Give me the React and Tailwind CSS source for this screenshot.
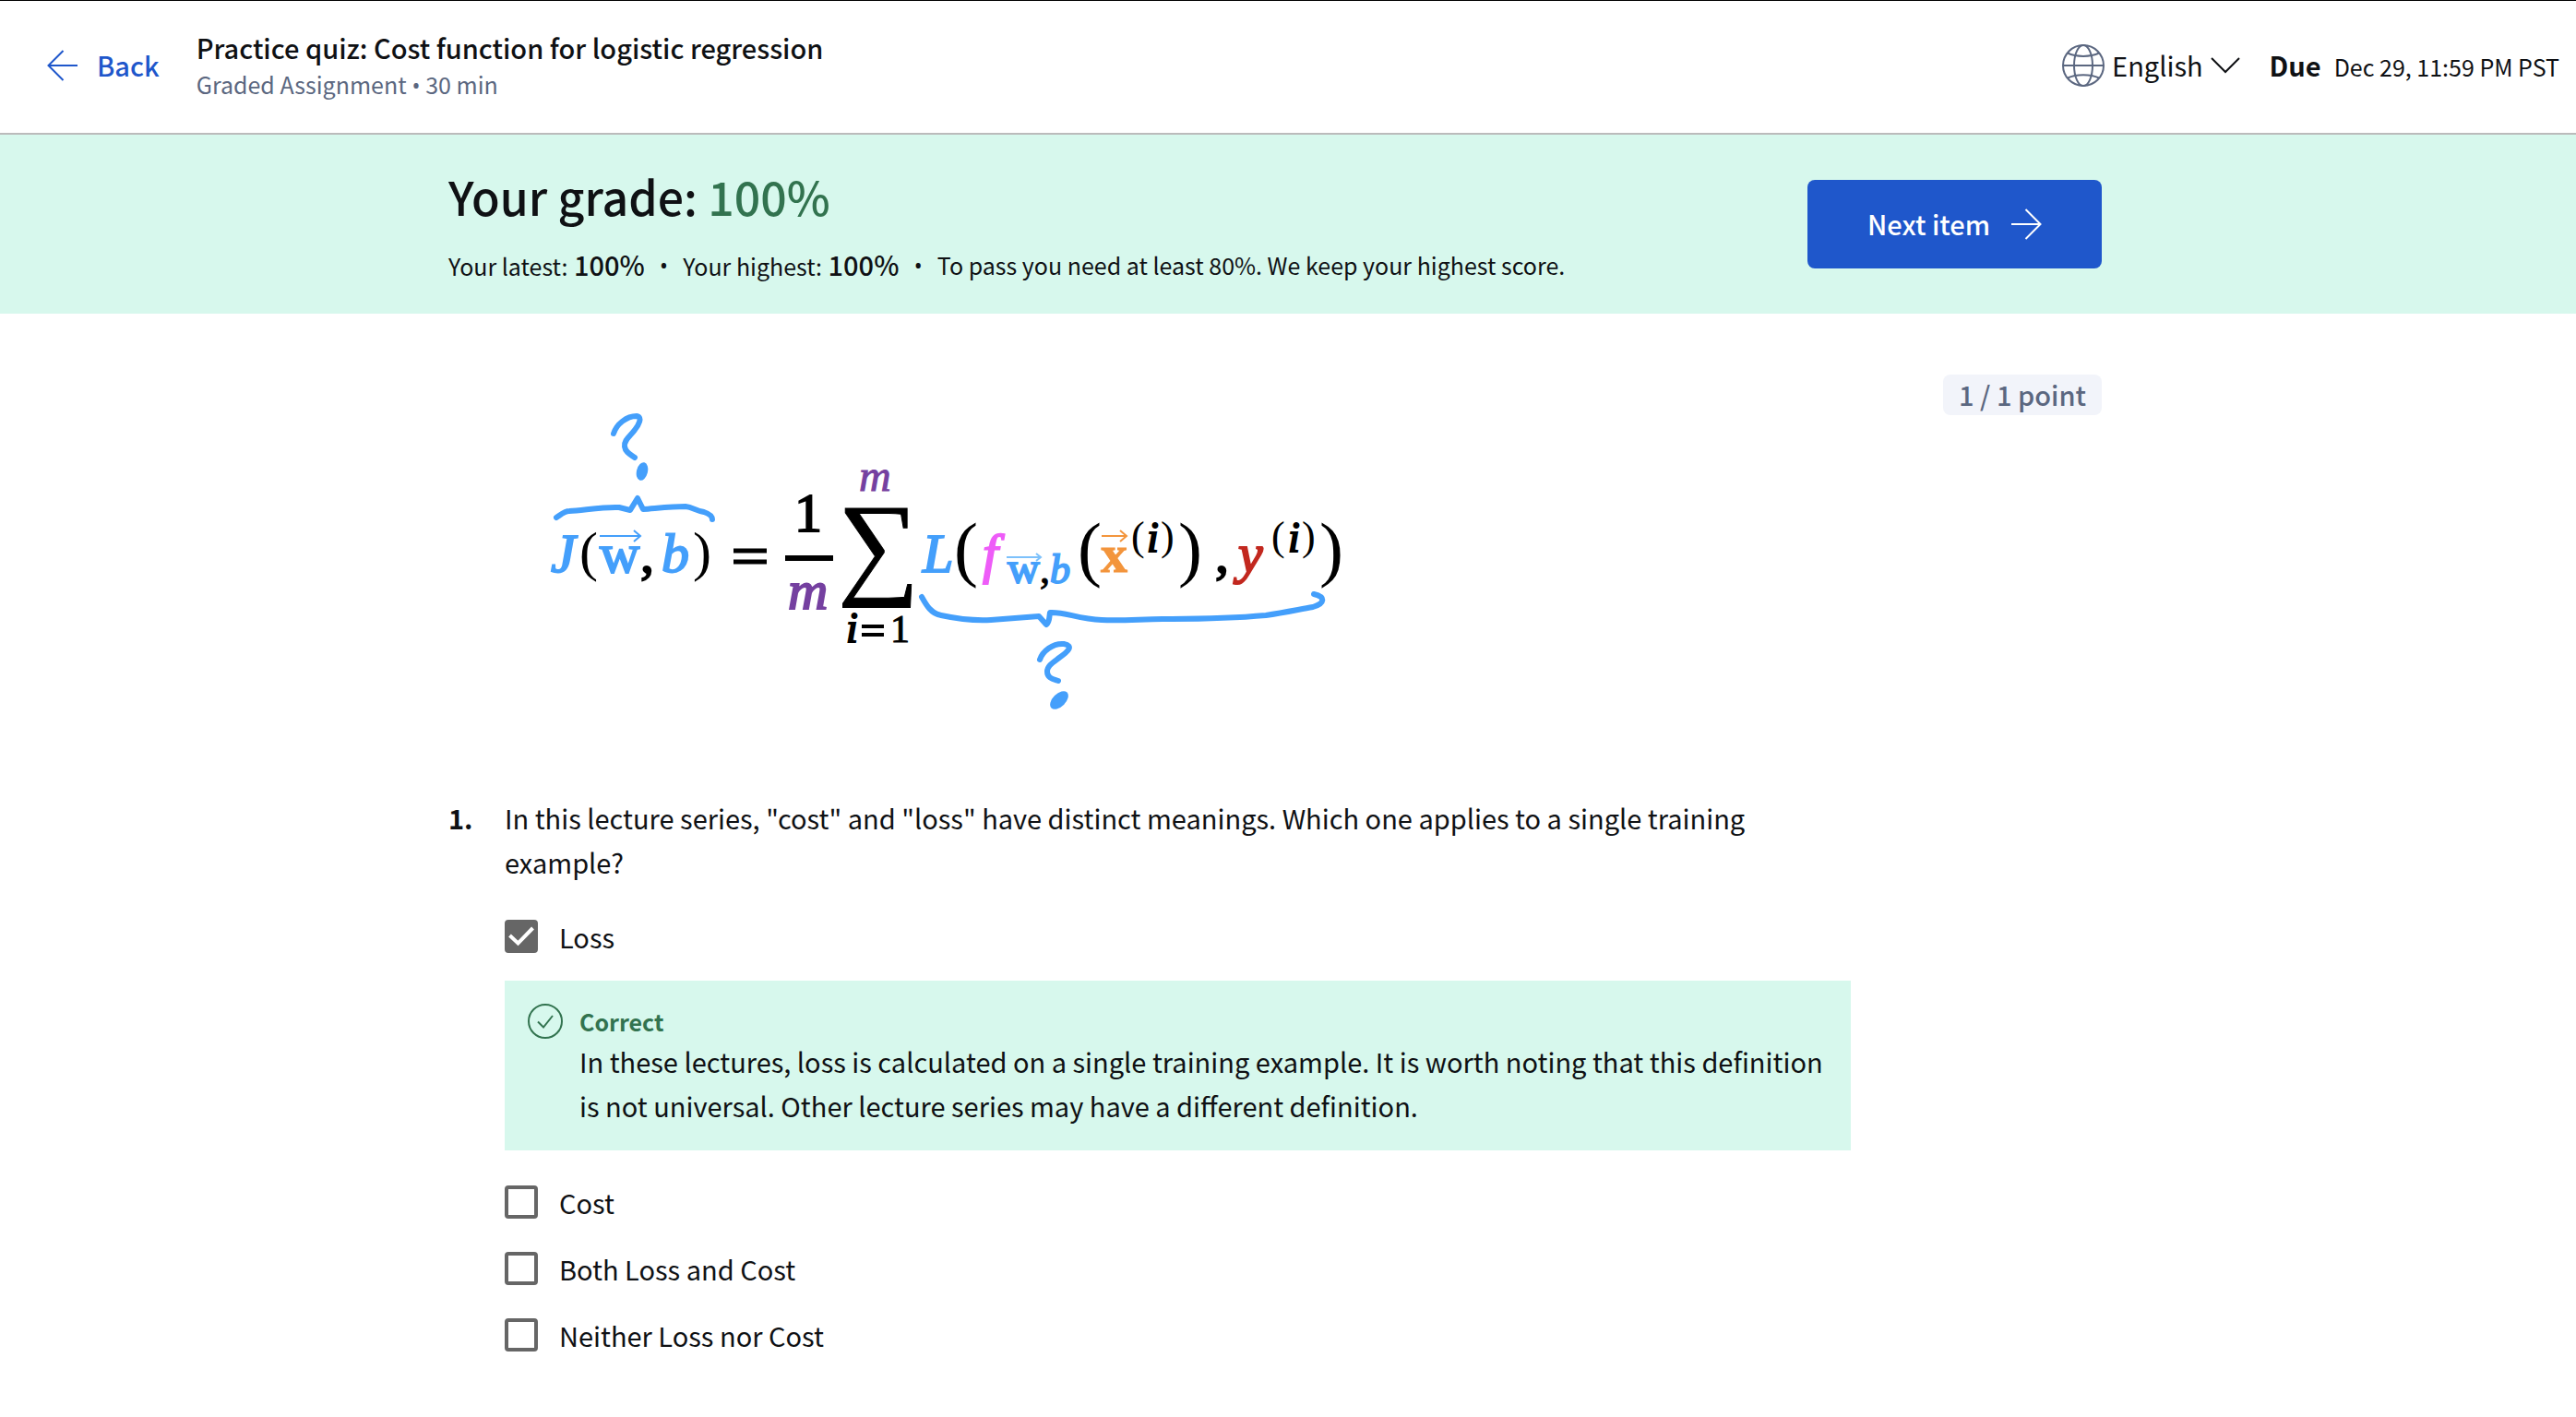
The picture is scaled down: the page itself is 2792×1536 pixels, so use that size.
import React from "react";

function ArrowIcon({ flip, className }) {
  return (
    <svg viewBox="0 0 34 34" className={className} fill="none" stroke="currentColor" strokeWidth="2" aria-hidden="true">
      {flip ? <path d="M33 17H2M17.500 1L1.500 17l16 16" /> : <path d="M1 17h32M16.500 1l16 16-16 16" />}
    </svg>
  );
}

function GlobeIcon() {
  return (
    <svg viewBox="0 0 46 46" className="size-[46px] text-[#5b6780]" fill="none" stroke="currentColor" strokeWidth="2" aria-hidden="true">
      <circle cx="23" cy="23" r="22" />
      <ellipse cx="23" cy="23" rx="10" ry="22" />
      <path d="M1 23h44M6 9.500c9 4.500 25 4.500 34 0M6 36.500c9-4.500 25-4.500 34 0" />
    </svg>
  );
}

function Bullet({ className }) {
  return <span className={`font-['Open_Sans',sans-serif] ${className ?? ""}`}>•</span>;
}

function Formula() {
  return (
    <svg
      viewBox="-13 -14 910 384"
      className="h-[384px] w-[910px] font-['Liberation_Serif',serif]"
      fontSize="60"
      strokeWidth="1"
      role="img"
      aria-label="Cost function J(w,b) as the mean of the loss L over m training examples"
    >
      <g fill="none" stroke="#449ffb" strokeWidth="6" strokeLinecap="round" strokeLinejoin="round">
        <path d="M105 50c3-10 14-19 25-19 7 1 2 10-2 15-5 7-12 11-11 18 1 7 7 9 11 12" />
        <path d="M43 141c6-4 9-7 14-7 16-1 39-5 54-4l12 3 8-13 6 12c14-1 31-3 46-3 8 1 10 4 20 6 6 2 9 4 9 8" />
        <path d="M439 227c5 9 10 18 21 20 14 3 37 6 54 5l52-4 8 9c4-3 3-8 4-13 16-1 30 7 56 8 24 1 44-1 66-1 40 0 78-1 112-4 20-3 34-6 51-9 13-4 14-11 1-14" />
        <path d="M567 295c3-9 14-18 26-17 11 2 5 8-5 15-8 6-13 9-13 15 0 7 6 8 12 10" />
      </g>
      <g fill="#449ffb" stroke="none">
        <ellipse cx="136" cy="91" rx="6" ry="10" transform="rotate(14 136 91)" />
        <ellipse cx="588" cy="339" rx="7" ry="12" transform="rotate(45 588 339)" />
      </g>

      <g fill="#449ffb" stroke="#449ffb" strokeWidth="2" fontStyle="italic">
        <text x="37" y="200">J</text>
        <text x="157" y="200">b</text>
        <text x="440" y="200">L</text>
        <text x="578" y="212" fontSize="44">b</text>
      </g>
      <g fill="#449ffb" stroke="#449ffb" strokeWidth="2">
        <text x="90" y="200">w</text>
        <text x="532" y="212" fontSize="48">w</text>
      </g>
      <path d="M90 161h44M127 155l7 6-7 6" fill="none" stroke="#449ffb" strokeWidth="2" />
      <path d="M531 184h36M563 180l5 4-5 4" fill="none" stroke="#7dc1fb" strokeWidth="2" />
      <text x="505" y="200" fill="#ee5cf8" stroke="#ee5cf8" strokeWidth="2" fontStyle="italic">f</text>
      <text x="633" y="200" fontSize="58" fill="#f3953c" stroke="#f3953c" fontWeight="bold">x</text>
      <path d="M634 161h26M654 155l7 6-7 6" fill="none" stroke="#f3953c" strokeWidth="2" />
      <text x="782" y="200" fill="#c2281f" stroke="#c2281f" strokeWidth="2" fontStyle="italic">y</text>
      <g fill="#7540a0" stroke="#7540a0" strokeWidth="2" fontStyle="italic">
        <text x="294" y="240">m</text>
        <text x="371" y="112" fontSize="48" strokeWidth="1">m</text>
      </g>

      <g fill="#000" stroke="#000">
        <text x="134" y="200" strokeWidth="2">,</text>
        <text x="757" y="200" strokeWidth="2">,</text>
        <text x="567" y="212" fontSize="44">,</text>
        <text x="301" y="156" strokeWidth="2">1</text>
        <text x="405" y="276" fontSize="42">1</text>
        <text x="357" y="276" fontSize="46" strokeWidth="2" fontStyle="italic">i</text>
        <text x="683" y="178" fontSize="46" strokeWidth="2" fontStyle="italic">i</text>
        <text x="836" y="178" fontSize="46" strokeWidth="2" fontStyle="italic">i</text>
        <text x="348" y="212" fontSize="124">∑</text>
      </g>
      <g fill="#000" stroke="none">
        <text x="68" y="198" fontSize="60">(</text>
        <text x="191" y="198" fontSize="60">)</text>
        <text x="474" y="201" fontSize="78">(</text>
        <text x="608" y="201" fontSize="78">(</text>
        <text x="717" y="201" fontSize="78">)</text>
        <text x="870" y="201" fontSize="78">)</text>
        <text x="666" y="176" fontSize="44">(</text>
        <text x="698" y="176" fontSize="44">)</text>
        <text x="818" y="176" fontSize="44">(</text>
        <text x="851" y="176" fontSize="44">)</text>
      </g>
      <g stroke="#000" strokeWidth="5">
        <path d="M235 177h36M235 189h36" />
        <path d="M374 259h24M374 268h24" strokeWidth="4" />
        <path d="M291 185h52" strokeWidth="6" />
      </g>
    </svg>
  );
}

function Option({ id, label, checked }) {
  return (
    <div className="flex items-center gap-[23px]">
      <span className="relative flex size-9 shrink-0">
        <input
          id={id}
          type="checkbox"
          defaultChecked={checked}
          className="peer size-9 appearance-none rounded-sm border-4 border-[#666] checked:bg-[#666]"
        />
        <svg viewBox="0 0 36 36" className="pointer-events-none absolute inset-0 hidden size-9 peer-checked:block" fill="none" stroke="#fff" strokeWidth="4" aria-hidden="true">
          <path d="M5.500 17l9 8.500L30.500 9" />
        </svg>
      </span>
      <label htmlFor={id} className="text-[29px] leading-9">{label}</label>
    </div>
  );
}

export default function App() {
  return (
    <div className="min-h-screen bg-white font-['Noto_Sans_CJK_SC','Open_Sans',sans-serif] text-[#0f1114]">
      <header className="flex h-[146px] items-center border-t border-b-2 border-t-black border-b-[#bbb] pr-[18px] pb-[3px] pl-[51px]">
        <a href="#back" className="flex items-center gap-5 text-[29px] font-medium text-[#1f57cb]">
          <ArrowIcon flip className="size-[34px]" />
          Back
        </a>
        <div className="ml-10">
          <h1 className="text-[29px] leading-10 font-medium">Practice quiz: Cost function for logistic regression</h1>
          <p className="text-[25px] leading-10 text-[#5b6780]">
            Graded Assignment <Bullet /> 30 min
          </p>
        </div>
        <div className="ml-auto flex items-center">
          <button type="button" className="flex items-center gap-2 text-[29px]">
            <GlobeIcon />
            <span>English</span>
            <svg viewBox="0 0 32 18" className="h-[18px] w-8" fill="none" stroke="currentColor" strokeWidth="2" aria-hidden="true">
              <path d="M1 1l15 15L31 1" />
            </svg>
          </button>
          <p className="ml-8 flex items-baseline gap-[14px]">
            <span className="text-[29px] font-bold">Due</span>
            <span className="text-[25px]">Dec 29, 11:59 PM PST</span>
          </p>
        </div>
      </header>

      <section className="bg-[#d7f8ed] pr-7">
        <div className="mx-auto flex h-[194px] max-w-[1792px] items-center justify-between">
          <div>
            <h2 className="text-[50px] leading-[68px] font-medium">
              Your grade: <span className="text-[#32734f]">100%</span>
            </h2>
            <p className="mt-5 flex items-center text-[25px] leading-10">
              <span>Your latest:<b className="text-[29px] font-medium"> 100%</b></span>
              <Bullet className="mx-4" />
              <span>Your highest:<b className="text-[29px] font-medium"> 100%</b></span>
              <Bullet className="mx-4" />
              <span>To pass you need at least 80%. We keep your highest score.</span>
            </p>
          </div>
          <button type="button" className="flex h-24 items-center gap-[22px] rounded-lg bg-[#1f57cb] px-[65px] text-[29px] font-medium text-white">
            Next item
            <ArrowIcon className="size-[34px]" />
          </button>
        </div>
      </section>

      <main className="pr-7">
        <div className="mx-auto flex max-w-[1792px] items-start justify-between pt-[66px]">
          <span className="mt-[456px] w-[61px] text-[29px] leading-[48px] font-bold">1.</span>
          <div className="max-w-[1459px] flex-1">
            <Formula />
            <p className="mt-[72px] text-[29px] leading-[48px]">
              In this lecture series, "cost" and "loss" have distinct meanings. Which one applies to a single training example?
            </p>
            <div className="mt-[39px]">
              <Option id="loss" label="Loss" checked />
            </div>
            <div className="mt-[30px] flex gap-[18px] bg-[#d7f8ed] py-[25px] pr-6 pl-[25px]">
              <svg viewBox="0 0 38 38" className="size-[38px] shrink-0 text-[#32734f]" fill="none" stroke="currentColor" strokeWidth="2" aria-hidden="true">
                <circle cx="19" cy="19" r="18" />
                <path d="M11 19.500l6 6L27 13" />
              </svg>
              <div>
                <p className="text-[25px] leading-[38px] font-bold text-[#32734f]">Correct</p>
                <p className="text-[29px] leading-[48px]">
                  In these lectures, loss is calculated on a single training example. It is worth noting that this definition is not universal. Other lecture series may have a different definition.
                </p>
              </div>
            </div>
            <div className="mt-[38px] flex flex-col gap-9">
              <Option id="cost" label="Cost" />
              <Option id="both" label="Both Loss and Cost" />
              <Option id="neither" label="Neither Loss nor Cost" />
            </div>
          </div>
          <span className="ml-auto rounded-lg bg-[#f2f4fa] px-[17px] pb-[2px] text-[29px] leading-[42px] font-medium text-[#5b6780]">1 / 1 point</span>
        </div>
      </main>
    </div>
  );
}
